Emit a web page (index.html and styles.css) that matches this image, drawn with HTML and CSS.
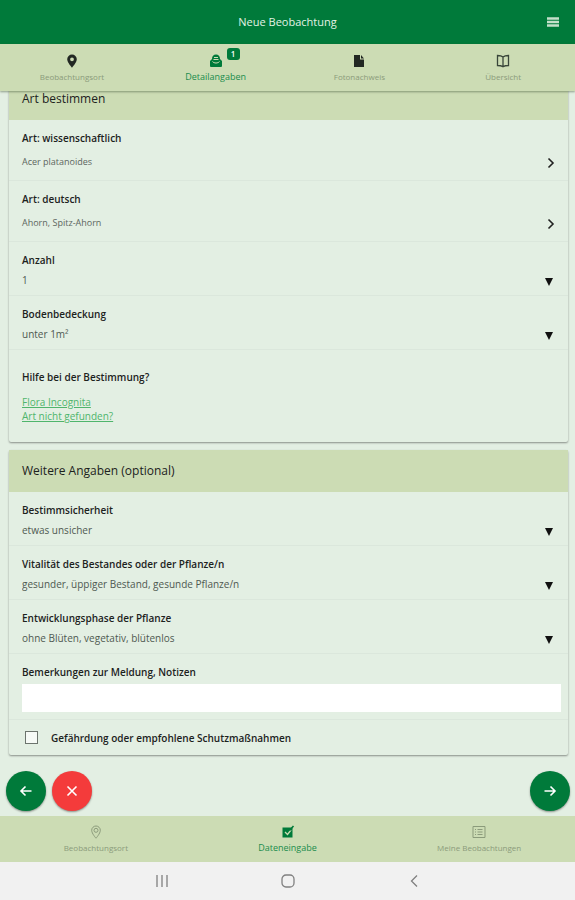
FILE: index.html
```
<!DOCTYPE html>
<html lang="de">
<head>
    <meta charset="UTF-8">
    <meta name="viewport" content="width=device-width, initial-scale=1.0">
    <title>Neue Beobachtung</title>
    <link rel="stylesheet" href="styles.css">
</head>
<body>

    <!-- Header -->
    <header class="topbar">
        <h1>Neue Beobachtung</h1>
        <button class="menu-btn" type="button" aria-label="Menü">
            <svg width="12" height="10" viewBox="0 0 12 10"><path d="M0 1.5h12M0 5h12M0 8.5h12" stroke="#c4e0ca" stroke-width="2.6"/></svg>
        </button>
    </header>

    <!-- Steps -->
    <nav class="tabs steps">
        <a href="#ort" class="tab">
            <svg width="16" height="16" viewBox="0 0 16 16"><path fill="#222823" fill-rule="evenodd" d="M8 1.5a4.800 4.800 0 0 0-4.800 4.800C3.200 9.500 8 14.700 8 14.700s4.800-5.200 4.800-8.400A4.800 4.800 0 0 0 8 1.500zm0 2.900a1.900 1.900 0 1 1 0 3.800 1.900 1.900 0 0 1 0-3.800z"/></svg>
            <span>Beobachtungsort</span>
        </a>
        <a href="#details" class="tab active">
            <span class="tab-icon">
                <svg width="16" height="16" viewBox="0 0 16 16"><path fill="#007a3a" d="M4 6C4 3 5.500 1.500 8 1.500S12 3 12 6l2 2v5a1 1 0 0 1-1 1H3a1 1 0 0 1-1-1V8z"/><path d="M6 4.500h4M5.500 6.500h5M4.500 8.500c1.500 2 5.500 2 7 0" stroke="#ccdcb4" fill="none"/></svg>
                <span class="badge">1</span>
            </span>
            <span>Detailangaben</span>
        </a>
        <a href="#foto" class="tab">
            <svg width="16" height="16" viewBox="0 0 16 16"><path fill="#222823" d="M3 2h6v4.500h4V14H3z"/><path fill="#222823" d="M10 2l3 3.500h-3z"/></svg>
            <span>Fotonachweis</span>
        </a>
        <a href="#uebersicht" class="tab">
            <svg width="16" height="16" viewBox="0 0 16 16"><path d="M8 4C6.500 2.700 4.500 2.500 2.500 2.500v10c2 0 4 .200 5.500 1.200 1.500-1 3.500-1.200 5.500-1.200v-10c-2 0-4 .200-5.500 1.500v9.700" fill="none" stroke="#39463a" stroke-width="1.300"/></svg>
            <span>Übersicht</span>
        </a>
    </nav>

    <main class="content">
        <!-- Species -->
        <section class="card">
            <h2>Art bestimmen</h2>
            <a href="#art" class="row link-row">
                <span class="label">Art: wissenschaftlich</span>
                <span class="value">Acer platanoides</span>
                <svg class="chevron" width="8" height="12" viewBox="0 0 8 12"><path d="M1.500 1.500L6 6l-4.500 4.500" fill="none" stroke="#222" stroke-width="1.600"/></svg>
            </a>
            <a href="#art-deutsch" class="row link-row">
                <span class="label">Art: deutsch</span>
                <span class="value">Ahorn, Spitz-Ahorn</span>
                <svg class="chevron" width="8" height="12" viewBox="0 0 8 12"><path d="M1.500 1.500L6 6l-4.500 4.500" fill="none" stroke="#222" stroke-width="1.600"/></svg>
            </a>
            <div class="row select-row">
                <label for="anzahl">Anzahl</label>
                <select id="anzahl"><option>1</option></select>
            </div>
            <div class="row select-row">
                <label for="boden">Bodenbedeckung</label>
                <select id="boden"><option>unter 1m²</option></select>
            </div>
            <div class="help">
                <h3>Hilfe bei der Bestimmung?</h3>
                <a href="#flora">Flora Incognita</a>
                <a href="#nicht-gefunden">Art nicht gefunden?</a>
            </div>
        </section>

        <!-- Optional details -->
        <section class="card">
            <h2>Weitere Angaben (optional)</h2>
            <div class="row select-row">
                <label for="sicherheit">Bestimmsicherheit</label>
                <select id="sicherheit"><option>etwas unsicher</option></select>
            </div>
            <div class="row select-row">
                <label for="vitalitaet">Vitalität des Bestandes oder der Pflanze/n</label>
                <select id="vitalitaet"><option>gesunder, üppiger Bestand, gesunde Pflanze/n</option></select>
            </div>
            <div class="row select-row">
                <label for="phase">Entwicklungsphase der Pflanze</label>
                <select id="phase"><option>ohne Blüten, vegetativ, blütenlos</option></select>
            </div>
            <div class="row note-row">
                <label for="notizen">Bemerkungen zur Meldung, Notizen</label>
                <input type="text" id="notizen">
            </div>
            <div class="check-row">
                <input type="checkbox" id="gefaehrdung">
                <label for="gefaehrdung">Gefährdung oder empfohlene Schutzmaßnahmen</label>
            </div>
        </section>
    </main>

    <!-- Back, cancel, next -->
    <div class="actions">
        <button class="fab" type="button" aria-label="Zurück">
            <svg width="14" height="14" viewBox="0 0 14 14"><path d="M12.500 7H2.500M6.500 2.500L2 7l4.500 4.500"/></svg>
        </button>
        <button class="fab cancel" type="button" aria-label="Abbrechen">
            <svg width="14" height="14" viewBox="0 0 14 14"><path d="M2.500 2.500l9 9M11.500 2.500l-9 9"/></svg>
        </button>
        <button class="fab next" type="button" aria-label="Weiter">
            <svg width="14" height="14" viewBox="0 0 14 14"><path d="M1.500 7h10M7.500 2.500L12 7l-4.500 4.500"/></svg>
        </button>
    </div>

    <!-- Main navigation -->
    <nav class="tabs bottom-tabs">
        <a href="#karte" class="tab">
            <svg width="16" height="16" viewBox="0 0 16 16" fill="none" stroke="#8b9b7b"><path d="M8 2a4.300 4.300 0 0 0-4.300 4.300C3.700 9.500 8 14.200 8 14.200s4.300-4.700 4.300-7.900A4.300 4.300 0 0 0 8 2z"/><circle cx="8" cy="6.300" r="2"/></svg>
            <span>Beobachtungsort</span>
        </a>
        <a href="#eingabe" class="tab active">
            <svg width="16" height="16" viewBox="0 0 16 16"><path fill="#007a3a" d="M2.500 3.500h10v10h-10z"/><path d="M5 8l2.500 2.500L11 6" fill="none" stroke="#ccdcb4" stroke-width="1.300"/><path d="M9.500 6.500L13.500 2" stroke="#007a3a" stroke-width="1.600"/></svg>
            <span>Dateneingabe</span>
        </a>
        <a href="#liste" class="tab">
            <svg width="16" height="16" viewBox="0 0 16 16" fill="none" stroke="#8b9b7b"><path d="M2 2.500h12v11H2zM6.500 5.500h5M6.500 8h5M6.500 10.500h5M4 5.500h1M4 8h1M4 10.500h1"/></svg>
            <span>Meine Beobachtungen</span>
        </a>
    </nav>

    <!-- System buttons -->
    <footer class="system-nav">
        <button type="button" aria-label="Letzte Apps">
            <svg width="14" height="14" viewBox="0 0 14 14"><path d="M2 1v12M7 1v12M12 1v12"/></svg>
        </button>
        <button type="button" aria-label="Startbildschirm">
            <svg width="14" height="14" viewBox="0 0 14 14"><rect x="1" y="1" width="12" height="12" rx="4"/></svg>
        </button>
        <button type="button" aria-label="Zurück">
            <svg width="14" height="14" viewBox="0 0 14 14"><path d="M10 1.500L4.500 7l5.500 5.500"/></svg>
        </button>
    </footer>

</body>
</html>
```
FILE: styles.css
```
/* General reset */
* {
    margin: 0;
    padding: 0;
    box-sizing: border-box;
    font-family: "Open Sans", "Noto Sans", sans-serif;
}

body {
    display: flex;
    flex-direction: column;
    min-height: 100vh;
    background-color: #e3efe3;
    color: #1c221d;
    font-size: 10px;
    line-height: 16px;
}

a {
    color: inherit;
    text-decoration: none;
}

button {
    border: none;
    background: none;
    cursor: pointer;
}

svg {
    display: block;
}

/* Header */
.topbar {
    display: grid;
    grid-template-columns: 1fr auto 1fr;
    align-items: center;
    height: 44px;
    padding: 0 16px;
    background-color: #007a3a;
    color: #e4f2e6;
}

.topbar h1 {
    grid-column: 2;
    font-size: 11px;
    font-weight: 500;
}

.menu-btn {
    justify-self: end;
}

/* Tab bars */
.tabs {
    display: flex;
    background-color: #ccdcb4;
}

.tab {
    flex: 1;
    display: flex;
    flex-direction: column;
    align-items: center;
    color: #8b9b7b;
    font-size: 8px;
}

.tab.active {
    color: #1a8c4c;
    font-size: 9px;
}

.steps {
    position: relative;
    z-index: 1;
    height: 47px;
    padding-top: 9px;
    box-shadow: 0 1px 2px rgba(60, 80, 50, 0.5);
}

.tab-icon {
    position: relative;
}

.badge {
    position: absolute;
    left: 19px;
    top: -5px;
    width: 13px;
    height: 12px;
    border-radius: 3px;
    background-color: #007a3a;
    color: #fff;
    font-size: 8px;
    font-weight: 600;
    line-height: 12px;
    text-align: center;
}

/* Cards, the first one is scrolled a bit under the steps */
.content {
    display: flex;
    flex-direction: column;
    gap: 8px;
    margin-top: -13px;
    padding: 0 7px 0 9px;
}

.card {
    border-radius: 2px;
    box-shadow: 0 1px 2px rgba(0, 0, 0, 0.4);
}

.card h2 {
    padding: 13px;
    background-color: #ccdcb4;
    font-size: 12px;
    font-weight: 500;
}

.row {
    display: flex;
    flex-direction: column;
    padding: 10px 7px 0 13px;
    border-bottom: 1px solid #dbe7dc;
}

.label,
label,
.help h3 {
    font-size: 10px;
    font-weight: 600;
}

.value {
    color: #5c665e;
    font-size: 9px;
}

.link-row {
    position: relative;
    gap: 8px;
    padding-bottom: 10px;
}

.chevron {
    position: absolute;
    right: 13px;
    bottom: 11px;
}

.select-row {
    gap: 4px;
    padding-bottom: 7px;
}

select {
    height: 16px;
    border: none;
    appearance: none;
    background: url("data:image/svg+xml,%3Csvg xmlns='http://www.w3.org/2000/svg' width='8' height='8'%3E%3Cpath d='M0 0h8L4 8z' fill='%23111'/%3E%3C/svg%3E") no-repeat right 8px bottom 2px;
    color: #4f5951;
    font-size: 10px;
    line-height: 16px;
}

.help {
    padding: 19px 13px;
    line-height: 14px;
}

.help h3 {
    margin-bottom: 10px;
    line-height: 16px;
}

.help a {
    display: table;
    color: #4fb56c;
    text-decoration: underline;
}

.note-row {
    gap: 4px;
    padding-bottom: 7px;
}

.note-row input {
    height: 28px;
    padding: 0 8px;
    border: none;
    background-color: #fff;
}

.check-row {
    display: flex;
    align-items: center;
    gap: 13px;
    height: 35px;
    padding-left: 16px;
}

.check-row input {
    appearance: none;
    width: 13px;
    height: 13px;
    border: 1px solid #6c746d;
    background-color: #f6faf6;
}

.check-row input:checked {
    background-color: #007a3a;
}

/* Round buttons */
.actions {
    display: flex;
    gap: 6px;
    margin-top: auto;
    padding: 15px 5px 5px 6px;
}

.fab {
    display: flex;
    align-items: center;
    justify-content: center;
    width: 40px;
    height: 40px;
    border-radius: 50%;
    background-color: #007a3a;
    box-shadow: 0 1px 2px rgba(0, 0, 0, 0.4);
}

.fab svg {
    fill: none;
    stroke: #fff;
    stroke-width: 1.6;
}

.fab.cancel {
    background-color: #f43b3b;
}

.fab.next {
    margin-left: auto;
}

.bottom-tabs {
    height: 46px;
    padding-top: 8px;
}

/* System buttons */
.system-nav {
    display: flex;
    justify-content: center;
    gap: 112px;
    padding: 12px 0;
    background-color: #f1f1f1;
}

.system-nav svg {
    fill: none;
    stroke: #808080;
    stroke-width: 1.3;
}
```
